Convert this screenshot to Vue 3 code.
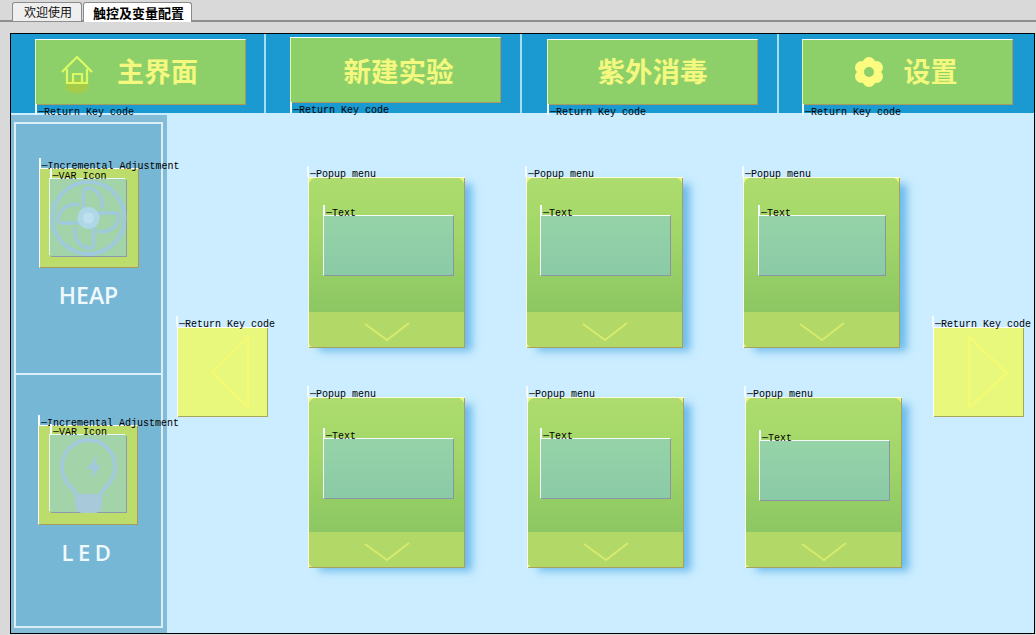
<script setup>
const navs = [
  { text: "主界面", icon: "home", cls: "nav-a" },
  { text: "新建实验", cls: "nav-b" },
  { text: "紫外消毒", cls: "nav-c" },
  { text: "设置", icon: "gear", cls: "nav-d" }
]

// widgets sit on a free canvas, so their place is data
const cards = [
  { x: 141, y: 62, tx: 15, ty: 38, tw: 131 },
  { x: 359, y: 62, tx: 14, ty: 38, tw: 131 },
  { x: 576, y: 62, tx: 15, ty: 38, tw: 128 },
  { x: 141, y: 282, tx: 15, ty: 41, tw: 131 },
  { x: 360, y: 282, tx: 13, ty: 41, tw: 131 },
  { x: 578, y: 282, tx: 14, ty: 43, tw: 131 }
]

const blades = [0, 90, 180, 270]
</script>

<template>
  <div class="page">
    <div class="tabs">
      <div class="tab">欢迎使用</div>
      <div class="tab active">触控及变量配置</div>
    </div>

    <div class="frame">
      <div class="topbar">
        <div v-for="n in navs" :key="n.text" class="nav-cell" :class="n.cls">
          <div class="nav-btn">
            <svg v-if="n.icon === 'home'" class="home" width="34" height="42" viewBox="0 0 34 42">
              <defs>
                <radialGradient id="homeGlow">
                  <stop offset="0" stop-color="#a6cc48" />
                  <stop offset="0.6" stop-color="#a6cc48" />
                  <stop offset="1" stop-color="#a6cc48" stop-opacity="0" />
                </radialGradient>
              </defs>
              <ellipse cx="17" cy="32" rx="14" ry="9" fill="url(#homeGlow)" />
              <path d="M2 18 L17 3 L32 18 M7 15 V29 H27 V15 M13 29 V20 H22 V29" fill="none" stroke="#dcfb62" stroke-width="2.2" />
            </svg>
            <svg v-if="n.icon === 'gear'" class="gear" width="30" height="30" viewBox="0 0 30 30">
              <g fill="#fbfb7f">
                <circle cx="15" cy="6.5" r="6.5" />
                <circle cx="22.5" cy="10.5" r="6.5" />
                <circle cx="22.5" cy="19.5" r="6.5" />
                <circle cx="15" cy="23.5" r="6.5" />
                <circle cx="7.5" cy="19.5" r="6.5" />
                <circle cx="7.5" cy="10.5" r="6.5" />
              </g>
              <circle cx="15" cy="15" r="5" fill="#8dd06a" />
            </svg>
            <span class="nav-text">{{ n.text }}</span>
            <span class="tag under">─Return Key code</span>
          </div>
        </div>
      </div>

      <div class="main">
        <aside class="panel">
          <div class="slot slot-heap">
            <div class="adjust">
              <span class="tag">─Incremental Adjustment</span>
              <div class="var-icon">
                <span class="tag small">─VAR Icon</span>
                <svg width="77" height="78" viewBox="-38.5 -39 77 78">
                  <circle r="36" fill="none" stroke="#9fc9dc" stroke-width="4" />
                  <path
                    v-for="b in blades"
                    :key="b"
                    :transform="`rotate(${b})`"
                    d="M-5 -8 L-5 -27 Q-5 -31 1 -30 C10 -28 16 -18 13 -9"
                    fill="none"
                    stroke="#9fc9dc"
                    stroke-width="3.5"
                  />
                  <circle r="11" fill="#aed7e8" />
                  <circle r="5.5" fill="#bde1ef" />
                </svg>
              </div>
            </div>
            <div class="slot-name">HEAP</div>
          </div>
          <div class="slot slot-led">
            <div class="adjust">
              <span class="tag">─Incremental Adjustment</span>
              <div class="var-icon">
                <span class="tag small">─VAR Icon</span>
                <svg width="77" height="78" viewBox="0 0 77 78">
                  <path
                    d="M26 60 C25 54 20 52 17 47 A26.5 26.5 0 1 1 60 47 C57 52 52 54 51 60"
                    fill="none"
                    stroke="#a3c9dc"
                    stroke-width="3.8"
                  />
                  <path d="M25 59 H52 V68 Q52 78 44 78 H33 Q25 78 25 68 Z" fill="#a8c9da" />
                  <path d="M47 20 L37 34 H43 L41 44 L51 30 H45 Z" fill="#a0c9de" />
                </svg>
              </div>
            </div>
            <div class="slot-name spaced">LED</div>
          </div>
        </aside>

        <div class="stage">
          <div class="side-btn" style="left:10px;top:212px">
            <span class="tag">─Return Key code</span>
            <svg width="91" height="90" viewBox="0 0 91 90">
              <path d="M71 10 L35 46 L71 80 Z" fill="none" stroke="#f3fb74" stroke-width="2.5" />
            </svg>
          </div>
          <div class="side-btn" style="left:766px;top:212px">
            <span class="tag">─Return Key code</span>
            <svg width="91" height="90" viewBox="0 0 91 90">
              <path d="M36 10 L74 46 L36 81 Z" fill="none" stroke="#f3fb74" stroke-width="2.5" />
            </svg>
          </div>

          <div
            v-for="(c, i) in cards"
            :key="i"
            class="card"
            :style="{ left: c.x + 'px', top: c.y + 'px' }"
          >
            <span class="tag">─Popup menu</span>
            <div class="card-top"></div>
            <div class="card-band">
              <svg width="46" height="20" viewBox="0 0 46 20">
                <path d="M1 2 L23 18 L45 1" fill="none" stroke="#d6eb6e" stroke-width="2" />
              </svg>
            </div>
            <div class="text-box" :style="{ left: c.tx + 'px', top: c.ty + 'px', width: c.tw + 'px' }">
              <span class="tag">─Text</span>
            </div>
          </div>
        </div>
      </div>
    </div>
  </div>
</template>

<style scoped>
.page {
  width: 1036px;
  height: 635px;
  background: #d9d9d9;
  overflow: hidden;
  font-family: "Noto Sans CJK SC", "Liberation Sans", sans-serif;
}

.tabs {
  display: flex;
  align-items: flex-end;
  height: 20px;
  padding-left: 12px;
  border-bottom: 2px solid #8e8e8e;
}

.tab {
  width: 70px;
  height: 19px;
  margin-bottom: -1px;
  padding-left: 2px;
  border: 1px solid #8a8a8a;
  border-bottom: none;
  border-radius: 3px 3px 0 0;
  background: #efefef;
  box-sizing: border-box;
  text-align: center;
  font-size: 12px;
  line-height: 18px;
  color: #111;
}

.tab.active {
  width: 109px;
  height: 20px;
  margin-left: 1px;
  margin-bottom: -2px;
  background: #fff;
  font-size: 13px;
  font-weight: 700;
  line-height: 19px;
  color: #000;
}

.frame {
  width: 1025px;
  height: 601px;
  margin: 11px 0 0 10px;
  border: 1px solid #000;
  box-sizing: border-box;
  background: #cbedff;
}

.topbar {
  display: grid;
  grid-template-columns: 255px 256px 257px 255px;
  height: 79px;
  background: #1a9ad0;
}

.nav-cell {
  padding: 5px 0 0 24px;
  border-right: 2px solid #aadcf0;
  box-sizing: border-box;
}

.nav-b {
  padding: 3px 0 0 24px;
}

.nav-c {
  padding-left: 25px;
}

.nav-d {
  padding-left: 23px;
  border-right: none;
}

.nav-btn {
  position: relative;
  display: flex;
  align-items: center;
  justify-content: center;
  width: 211px;
  height: 66px;
  box-sizing: border-box;
  background: #8dd06a;
  border: 1px solid;
  border-color: #fff #a89a5c #a89a5c #f2f6a8;
}

.nav-a .nav-btn {
  gap: 23px;
  padding-right: 23px;
}

.nav-b .nav-btn {
  padding-left: 6px;
}

.nav-d .nav-btn {
  gap: 20px;
  padding-right: 4px;
}

.nav-text {
  margin-top: -4px;
  font-size: 27px;
  font-weight: 700;
  color: #f4f87e;
}

.nav-b .nav-text {
  margin-top: 0;
  font-size: 27.5px;
}

.nav-c .nav-text {
  font-size: 27.5px;
}

.home {
  margin-top: 6px;
}

.main {
  display: flex;
  height: 518px;
  margin-top: 2px;
}

.panel {
  display: flex;
  flex-direction: column;
  width: 156px;
  padding: 7px 4px 5px 3px;
  box-sizing: border-box;
  background: #84bcd8;
}

.slot {
  display: flex;
  flex-direction: column;
  align-items: center;
  height: 253px;
  box-sizing: border-box;
  background: #77b7d6;
  border: 2px solid #d9eef7;
}

.slot-heap {
  padding-top: 44px;
}

.slot-led {
  height: 255px;
  margin-top: -2px;
  padding-top: 50px;
}

.adjust {
  position: relative;
  width: 100px;
  height: 100px;
  padding: 10px 0 0 10px;
  box-sizing: border-box;
  background: #bcdc6b;
  border: 1px solid;
  border-color: #fff #a89a5c #a89a5c #fff;
}

.slot-led .adjust {
  margin-left: -1px;
  padding: 9px 0 0 11px;
}

.var-icon {
  position: relative;
  width: 76px;
  height: 77px;
  background: #a3d3a8;
  box-shadow: -1px -1px 0 #eaf6f4, 1px 1px 0 #8a9bb0;
}

.var-icon svg {
  display: block;
  overflow: visible;
}

.slot-name {
  margin-top: 12px;
  font-family: "Open Sans", "Liberation Sans", sans-serif;
  font-size: 23px;
  font-weight: 600;
  line-height: 30px;
  color: #f0f9fc;
}

.slot-name.spaced {
  margin-top: 12px;
  font-size: 22px;
  letter-spacing: 4.5px;
}

.stage {
  position: relative;
  flex: 1;
}

.side-btn {
  position: absolute;
  width: 91px;
  height: 90px;
  box-sizing: border-box;
  background: #e8f87c;
  box-shadow: inset 1px 1px 0 #fff, inset -1px -1px 0 #a6a65c;
}

.side-btn svg {
  display: block;
}

.card {
  position: absolute;
  width: 157px;
  height: 171px;
  background: #e6f57c;
  box-shadow: 9px 5px 8px -2px rgba(70, 165, 225, 0.7);
}

.card-top {
  height: 135px;
  border-radius: 10px 10px 0 0;
  background: linear-gradient(180deg, #aedc6e 0%, #a3d769 40%, #8cc763 100%);
}

.card-band {
  display: flex;
  justify-content: center;
  height: 36px;
  padding-top: 10px;
  box-sizing: border-box;
  border-radius: 0 0 0 8px;
  background: #b2d968;
}

.card-band svg {
  display: block;
}

.card::after {
  content: "";
  position: absolute;
  inset: 0;
  box-shadow: inset 1px 1px 0 #fdfde0, inset -1px -1px 0 #a8a060;
}

.text-box {
  position: absolute;
  z-index: 1;
  height: 61px;
  box-sizing: border-box;
  background: linear-gradient(180deg, #96d3a8, #8acaa6);
  border: 1px solid;
  border-color: #f4fbf6 #8a94a4 #8a94a4 #f4fbf6;
}

.tag {
  position: absolute;
  z-index: 2;
  left: -1px;
  top: -11px;
  padding-left: 1px;
  height: 11px;
  border-left: 2px solid #f4fbff;
  font-family: "Liberation Mono", "DejaVu Sans Mono", monospace;
  font-size: 10px;
  line-height: 17px;
  font-weight: 400;
  color: #000;
  white-space: nowrap;
}

.tag.under {
  top: 100%;
}

.tag.small {
  left: 0;
}
</style>

<style>
html,
body {
  margin: 0;
  background: #d9d9d9;
}
</style>
